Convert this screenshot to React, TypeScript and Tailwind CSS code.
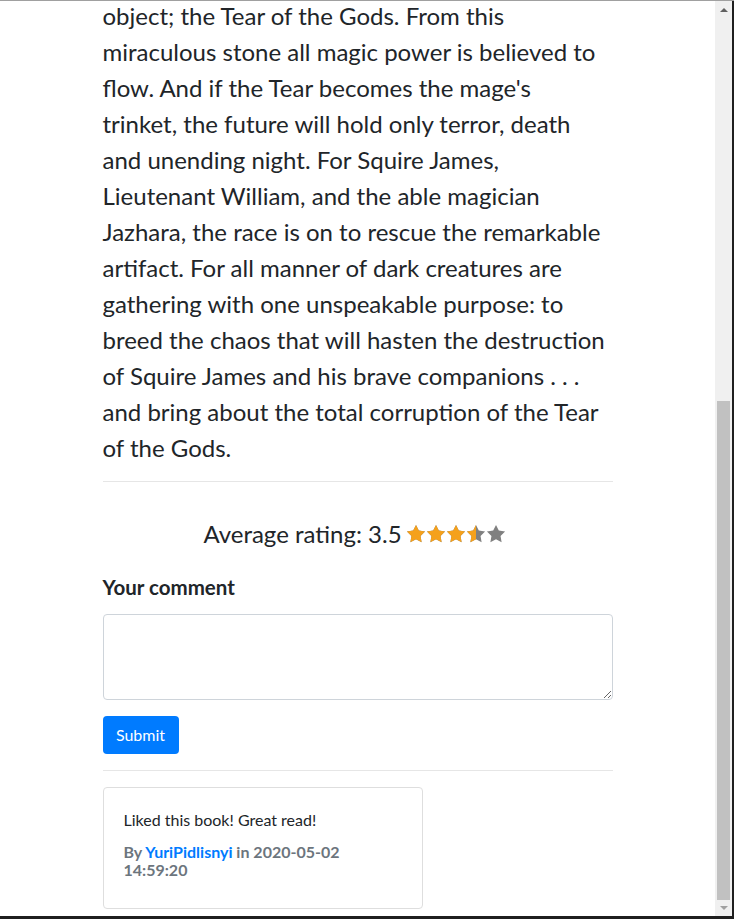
const lines = [
  "object; the Tear of the Gods. From this",
  "miraculous stone all magic power is believed to",
  "flow. And if the Tear becomes the mage's",
  "trinket, the future will hold only terror, death",
  "and unending night. For Squire James,",
  "Lieutenant William, and the able magician",
  "Jazhara, the race is on to rescue the remarkable",
  "artifact. For all manner of dark creatures are",
  "gathering with one unspeakable purpose: to",
  "breed the chaos that will hasten the destruction",
  "of Squire James and his brave companions . . .",
  "and bring about the total corruption of the Tear",
  "of the Gods.",
];

const STAR = "12,2 15.09,8.26 22,9.27 17,14.14 18.18,21.02 12,17.77 5.82,21.02 7,14.14 2,9.27 8.91,8.26";

function Star({ fill, id }: { fill: number; id: string }) {
  return (
    <svg width="20" height="20" viewBox="1 1 22 22" className="inline-block align-[-2px]">
      <defs>
        <clipPath id={id}>
          <rect x="0" y="0" width={2 + 20 * fill} height="24" />
        </clipPath>
      </defs>
      <polygon points={STAR} fill="#808080" />
      {fill > 0 && <polygon points={STAR} fill="#f5a11c" clipPath={`url(#${id})`} />}
    </svg>
  );
}

export default function App() {
  const rating = 3.5;
  return (
    <div className="w-[734px] h-[919px] overflow-hidden flex flex-col bg-[#1f1f1f]">
      <div className="h-px bg-[#a0a0a0]" />
      <div className="flex flex-1 min-h-0 mr-[2px] mb-[3px]">
        <div className="flex-1 bg-white text-[#212529] font-['Lato',sans-serif] overflow-hidden">
          <div className="mx-auto w-[510px] -mt-[3px]">
            <div className="text-[24px] leading-[36px]">
              {lines.map((l, i) => (
                <div key={i} className="whitespace-nowrap">
                  {l}
                </div>
              ))}
            </div>
            <hr className="mt-[15px] border-0 border-t border-[#e6e6e6]" />
            <div className="mt-[34px] h-[36px] pr-[6px] flex items-center justify-center text-[24px] leading-[36px] whitespace-nowrap">
              <span>Average rating: {rating}</span>
              <span className="ml-[4px] inline-flex">
                {[1, 2, 3, 4, 5].map((n) => (
                  <Star key={n} id={`star-${n}`} fill={Math.max(0, Math.min(1, rating - (n - 1)))} />
                ))}
              </span>
            </div>
            <div className="mt-[23px] text-[20.5px] leading-[24px] font-bold">Your comment</div>
            <textarea className="mt-[15px] block w-full h-[86px] rounded-[4px] border border-[#ced4da] bg-white outline-none resize-y" />
            <button className="mt-[16px] h-[38px] w-[76px] rounded-[4px] bg-[#007bff] text-white text-[16px]">
              Submit
            </button>
            <hr className="mt-[16px] border-0 border-t border-[#e6e6e6]" />
            <div className="mt-[16px] w-[320px] h-[122px] rounded-[4px] border border-[#dedede] px-[20px] pt-[22px]">
              <div className="text-[16px] leading-[20px]">Liked this book! Great read!</div>
              <div className="mt-[13px] text-[16px] leading-[18px] font-bold text-[#6c757d]">
                By <span className="text-[#007bff]">YuriPidlisnyi</span> in 2020-05-02
                <br />
                14:59:20
              </div>
            </div>
          </div>
        </div>
        <div className="w-[17px] bg-[#f0f0f0] flex flex-col items-center">
          <div className="h-[17px] flex items-center justify-center">
            <div className="w-0 h-0 border-l-[4px] border-r-[4px] border-b-[4px] border-l-transparent border-r-transparent border-b-[#606060]" />
          </div>
          <div className="mt-[383px] w-[13px] h-[499px] bg-[#c1c1c1]" />
          <div className="flex-1 flex items-center justify-center">
            <div className="w-0 h-0 border-l-[4px] border-r-[4px] border-t-[4px] border-l-transparent border-r-transparent border-t-[#a0a0a0]" />
          </div>
        </div>
      </div>
    </div>
  );
}
